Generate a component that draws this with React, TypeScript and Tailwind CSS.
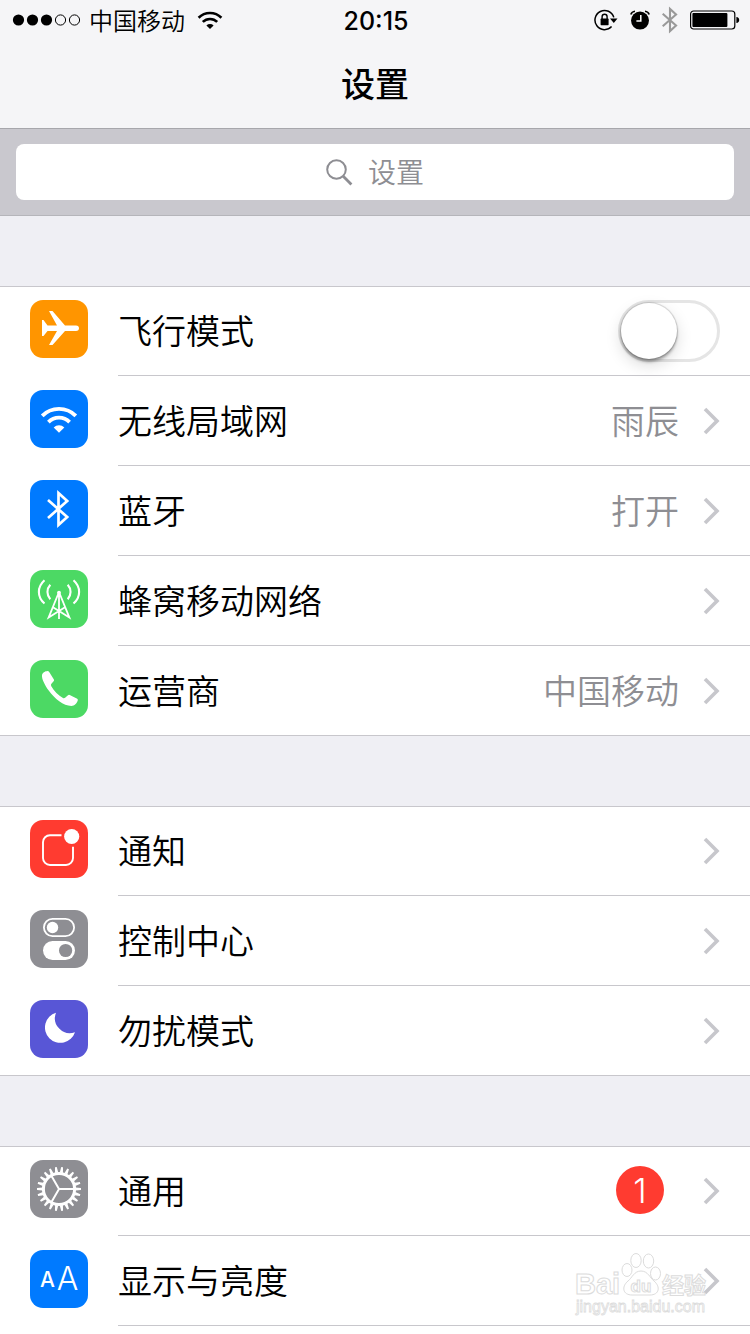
import { ReactNode, useState } from 'react';

type Item = {
  id: string;
  nombre: string;
  color: string;
  icon: ReactNode;
  valor?: string;
  badge?: number;
  toggle?: boolean;
};

const WIFI = (
  <>
    <path d="M12.2 25.9A23.7 23.7 0 0 1 45.8 25.9M18.4 32.1A15 15 0 0 1 39.6 32.1" fill="none" stroke="currentColor" strokeWidth="3.8" />
    <path d="M29 42.7L23.7 37.4A7.5 7.5 0 0 1 34.3 37.4Z" fill="currentColor" />
  </>
);

const BLUETOOTH = 'M18 20L37.2 37L28.5 45V13L37.2 21L18 38';

const TEETH = Array.from({ length: 22 }, (_, i) => (i * 360) / 22);

const GROUPS: Item[][] = [
  [
    {
      id: 'airplane', nombre: '飞行模式', color: 'bg-[#ff9500]', toggle: true,
      icon: <path d="M12 20H13.5L17.5 25.5H27L19 11H22.5L35 25.5H46Q49 25.8 49 28.2Q49 30.6 46 31H35L22.5 45H19L27 31H17.5L13.5 36H12Z" fill="#fff" />,
    },
    { id: 'wifi', nombre: '无线局域网', color: 'bg-[#007aff]', valor: '雨辰', icon: WIFI },
    {
      id: 'bluetooth', nombre: '蓝牙', color: 'bg-[#007aff]', valor: '打开',
      icon: <path d={BLUETOOTH} fill="none" stroke="#fff" strokeWidth="2.7" />,
    },
    {
      id: 'cellular', nombre: '蜂窝移动网络', color: 'bg-[#4cd964]',
      icon: (
        <g fill="none" stroke="#fff" strokeWidth="1.8">
          <path d="M14.5 10.3C7 17 7 27 14.5 33.5M43.5 10.3C51 17 51 27 43.5 33.5" strokeWidth="2.1" />
          <path d="M20.3 14.8C16.5 19 16.5 25 20.3 29.2M37.7 14.8C41.5 19 41.5 25 37.7 29.2" strokeWidth="2.1" />
          <path d="M29 22V49M28.6 23L18.6 47.6L34.6 37.6M29.4 23L39.4 47.6L23.4 37.6" />
          <circle cx="29" cy="22.6" r="1.9" fill="#fff" stroke="none" />
        </g>
      ),
    },
    {
      id: 'carrier', nombre: '运营商', color: 'bg-[#4cd964]', valor: '中国移动',
      icon: <path d="M12 15.2C12.3 12.6 15.2 11.2 17.6 11Q18.6 11 19.2 12L23.9 19.4Q24.4 20.4 23.6 21.3L21.2 24Q20.7 25 21.3 26.2C24 31.2 28.4 35.3 33 38Q34.2 38.5 35.1 37.7L38 35.2Q38.8 34.6 39.7 35L47.2 38.7Q48.1 39.3 47.8 40.3C46.8 43.6 44.5 46 41.4 46C33.5 46 24.5 38.8 18.7 30.6C14.5 24.5 11.7 19 12 15.2Z" fill="#fff" />,
    },
  ],
  [
    {
      id: 'notifications', nombre: '通知', color: 'bg-[#ff3b30]',
      icon: (
        <>
          <path d="M31.5 15.2H20a7 7 0 0 0-7 7V38a7 7 0 0 0 7 7H36a7 7 0 0 0 7-7V26.8" fill="none" stroke="#fff" strokeWidth="1.9" />
          <circle cx="41.7" cy="16.5" r="7.6" fill="#fff" />
        </>
      ),
    },
    {
      id: 'control', nombre: '控制中心', color: 'bg-[#8e8e93]',
      icon: (
        <>
          <rect x="13.9" y="8.9" width="30.2" height="17.2" rx="8.6" fill="none" stroke="#fff" strokeWidth="1.8" />
          <circle cx="22.5" cy="17.5" r="5.7" fill="#fff" />
          <rect x="13" y="31" width="32" height="19" rx="9.5" fill="#fff" />
          <circle cx="35.6" cy="40.5" r="6.6" fill="#8e8e93" />
        </>
      ),
    },
    {
      id: 'dnd', nombre: '勿扰模式', color: 'bg-[#5856d6]',
      icon: <path d="M26 12.7A15.4 15.4 0 1 0 45 32.3A15 15 0 0 1 26 12.7Z" fill="#fff" />,
    },
  ],
  [
    {
      id: 'general', nombre: '通用', color: 'bg-[#8e8e93]', badge: 1,
      icon: (
        <g fill="none" stroke="#fff">
          <circle cx="29" cy="29" r="15.6" strokeWidth="3" />
          {TEETH.map(a => (
            <path key={a} d="M45.5 27.4L51 28.1V29.9L45.5 30.6Z" fill="#fff" stroke="none" transform={`rotate(${a} 29 29)`} />
          ))}
          <path d="M44 29H29L21.5 16M29 29L21.5 42" strokeWidth="2" />
        </g>
      ),
    },
    {
      id: 'display', nombre: '显示与亮度', color: 'bg-[#007aff]',
      icon: (
        <g fill="#fff" className="font-['Inter',sans-serif]">
          <text x="17.5" y="37" fontSize="21" fontWeight="500" textAnchor="middle">A</text>
          <text x="37.5" y="40" fontSize="32" fontWeight="300" textAnchor="middle">A</text>
        </g>
      ),
    },
  ],
];

function StatusBar() {
  return (
    <div className="grid h-10 grid-cols-[1fr_auto_1fr] items-center pl-3 pr-2.5">
      <div className="flex items-center">
        <svg width="70" height="12" viewBox="0 0 70 12" aria-hidden="true">
          {[6, 20, 34].map(x => <circle key={x} cx={x + 0.5} cy="6" r="5.6" />)}
          {[48, 62].map(x => <circle key={x} cx={x + 0.5} cy="6" r="5.1" fill="none" stroke="#000" />)}
        </svg>
        <span className="ml-[7px] text-2xl font-[350]">中国移动</span>
        <svg className="ml-3" width="26" height="19" viewBox="10 16 38 28" aria-hidden="true">{WIFI}</svg>
      </div>
      <time className="pt-0.5 font-['Inter',sans-serif] text-[25px] font-medium leading-8">20:15</time>
      <div className="flex items-center justify-end">
        <svg width="24" height="22" viewBox="0 0 24 22" aria-hidden="true">
          <path d="M17.6 17.6A9.6 9.6 0 1 1 19.8 8.4" fill="none" stroke="#000" strokeWidth="1.5" />
          <path d="M16 9.5H23.5L19.8 14Z" />
          <rect x="6.6" y="9.6" width="8" height="6.6" rx=".6" />
          <path d="M8.1 10V7.8a2.5 2.5 0 0 1 5 0V10" fill="none" stroke="#000" strokeWidth="1.4" />
        </svg>
        <svg className="ml-3" width="20" height="20" viewBox="0 0 20 20" aria-hidden="true">
          <circle cx="10" cy="10.6" r="9" />
          <path d="M.8 4.4Q1.8 1.6 5 1.2M19.2 4.4Q18.2 1.6 15 1.2" fill="none" stroke="#000" strokeWidth="1.6" />
          <path d="M10.8 5V11H6.4" fill="none" stroke="#fff" strokeWidth="1.5" />
        </svg>
        <svg className="ml-3" width="16" height="28" viewBox="17 9 23 40" aria-hidden="true">
          <path d={BLUETOOTH} fill="none" stroke="#999" strokeWidth="3" />
        </svg>
        <svg className="ml-3" width="50" height="20" viewBox="0 0 50 20" aria-hidden="true">
          <rect x=".6" y="1" width="44.2" height="18" rx="3" fill="none" stroke="#000" strokeWidth="1.2" />
          <rect x="2.4" y="3" width="35" height="14" rx="1" />
          <path d="M46.4 7Q49.2 7.4 49.2 10Q49.2 12.6 46.4 13Z" />
        </svg>
      </div>
    </div>
  );
}

function Watermark() {
  return (
    <svg className="pointer-events-none absolute right-9 bottom-2 opacity-80" width="140" height="66" viewBox="0 0 140 66" aria-hidden="true">
      <g fill="#fff" fillOpacity=".6" stroke="#d4d4d4" strokeWidth="1" className="font-['Liberation_Sans','Noto_Sans_CJK_SC',sans-serif]">
        <text x="1" y="42" fontSize="29" fontWeight="700">Bai</text>
        <path d="M67 19C60 19 58 26 54 29C47 35 49 43 58 43H76C85 43 87 35 80 29C76 26 74 19 67 19Z" />
        <ellipse cx="53" cy="18" rx="5" ry="6.5" />
        <ellipse cx="62" cy="8.5" rx="5.2" ry="7" />
        <ellipse cx="74.5" cy="9" rx="5.2" ry="7" />
        <ellipse cx="81.5" cy="21.5" rx="5" ry="6.5" />
        <text x="67" y="40" fontSize="17" fontWeight="700" textAnchor="middle">du</text>
        <text x="88" y="41" fontSize="22" fontWeight="700">经验</text>
        <text x="2" y="60" fontSize="16" strokeWidth=".8">jingyan.baidu.com</text>
      </g>
    </svg>
  );
}

function Fila({ item }: { item: Item }) {
  const [on, setOn] = useState(false);

  const contenido = (
    <>
      <span className="flex items-end border-b border-white pb-[17px] pl-[30px] pr-[30px] group-last:border-[#c8c7cc]">
        <svg className={`size-[58px] rounded-[13px] text-white ${item.color}`} viewBox="0 0 58 58" aria-hidden="true">{item.icon}</svg>
      </span>
      <span className="flex flex-1 items-center border-b border-[#c8c7cc] pr-[30px]">
        <span className="flex-1 pb-[3px]">{item.nombre}</span>
        {item.valor && <span className="pb-[3px] text-[#8e8e93]">{item.valor}</span>}
        {item.badge && (
          <span className="mr-[15px] mb-0.5 flex size-12 items-center justify-center rounded-full bg-[#ff3b30] font-['Inter',sans-serif] font-light text-white">{item.badge}</span>
        )}
        {item.toggle ? (
          <input
            id={item.id}
            type="checkbox"
            role="switch"
            checked={on}
            onChange={e => setOn(e.target.checked)}
            className="h-[62px] w-[102px] appearance-none rounded-full border-[3px] border-[#e5e5e5] bg-white before:block before:size-14 before:rounded-full before:bg-white before:shadow-[0_0_1px_1px_rgba(0,0,0,0.15),0_3px_3px_rgba(0,0,0,0.3),0_6px_16px_rgba(0,0,0,0.15)] before:transition-transform checked:border-[#4cd964] checked:bg-[#4cd964] checked:before:translate-x-10"
          />
        ) : (
          <svg className="ml-6" width="17" height="28" viewBox="0 0 17 28" aria-hidden="true">
            <path d="M2 2L14 14L2 26" fill="none" stroke="#c7c7cc" strokeWidth="3.6" />
          </svg>
        )}
      </span>
    </>
  );

  return (
    <li className="group relative flex h-[90px] first:h-[89px]">
      {item.toggle
        ? <label htmlFor={item.id} className="flex flex-1">{contenido}</label>
        : <a href={`#${item.id}`} className="flex flex-1">{contenido}</a>}
      {item.id === 'display' && <Watermark />}
    </li>
  );
}

export default function App() {
  return (
    <div className="flex min-h-screen flex-col bg-[#efeff4] font-['Noto_Sans_CJK_SC',sans-serif] text-black">
      <header className="border-b border-[#a7a7ac] bg-[#f5f5f7]">
        <StatusBar />
        <h1 className="flex h-[88px] items-center justify-center pb-[3px] text-[34px] font-medium">设置</h1>
      </header>

      <div className="border-b border-[#b5b5ba] bg-[#c9c8ce] px-4 py-[15px]">
        <label className="flex h-14 items-center justify-center gap-[15px] rounded-lg bg-white">
          <svg width="27" height="27" viewBox="0 0 27 27" fill="none" stroke="#8e8e93" aria-hidden="true">
            <circle cx="10.5" cy="10.5" r="9.3" strokeWidth="2" />
            <path d="M17.2 17.2L25.4 25.4" strokeWidth="2.8" />
          </svg>
          <input type="text" aria-label="设置" placeholder="设置" className="w-14 pb-[3px] text-[28px] font-[350] outline-none placeholder:text-[#8e8e93]" />
        </label>
      </div>

      <main className="flex flex-1 flex-col gap-[70px] pt-[70px] text-[34px] font-[350]">
        {GROUPS.map((items, i) => {
          const ultimo = i === GROUPS.length - 1;
          return (
            <ul key={i} className={ultimo ? 'flex-1 border-t border-[#c8c7cc] bg-white' : 'border-t border-[#c8c7cc] bg-white'}>
              {items.map(item => <Fila key={item.id} item={item} />)}
              {ultimo && <li className="h-2" />}
            </ul>
          );
        })}
      </main>
    </div>
  );
}
